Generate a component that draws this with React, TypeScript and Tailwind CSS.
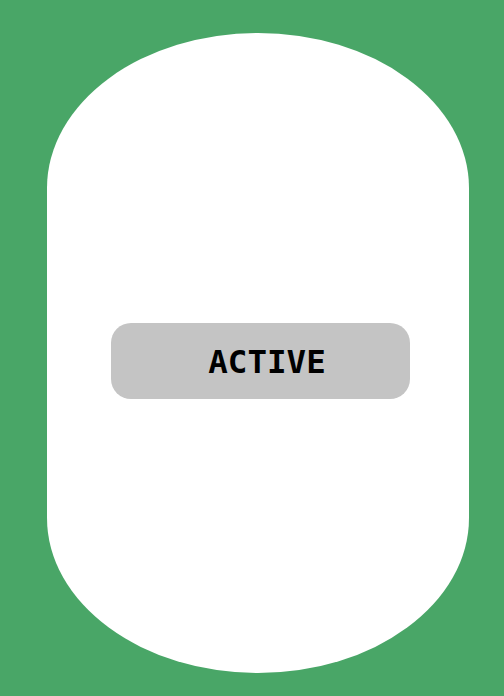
import React from "react";

const StatusBadge: React.FC<{ label: string }> = ({ label }) => {
  return (
    <div className="ml-[64px] mt-[290px] flex h-[76px] w-[299px] items-center justify-center rounded-[20px] bg-[#c4c4c4] pl-[13px] pt-[3px]">
      <span className="font-['DejaVu_Sans_Mono',monospace] text-[32.5px] font-bold leading-none text-black">
        {label}
      </span>
    </div>
  );
};

export default function App() {
  return (
    <div className="h-[696px] w-[504px] overflow-hidden bg-[#49a667] pl-[47px] pt-[33px]">
      <div className="flex h-[640px] w-[422px] flex-col items-start rounded-[211px/155px] bg-white">
        <StatusBadge label="ACTIVE" />
      </div>
    </div>
  );
}
